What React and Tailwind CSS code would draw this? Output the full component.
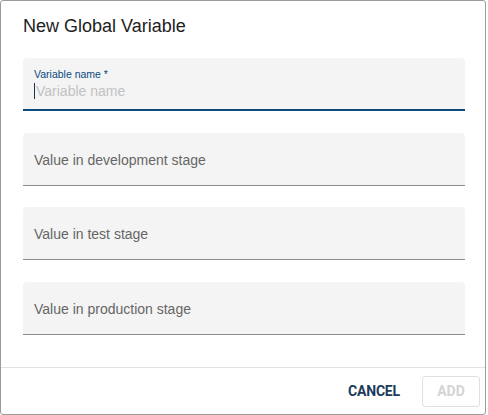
import React from 'react';

const fields = [
    'Value in development stage',
    'Value in test stage',
    'Value in production stage',
];

const App = () => {
    return (
        <div className="w-[488px] h-[415px] bg-white font-['Liberation_Sans',Arial,sans-serif]">
            <div className="w-[486px] h-[415px] flex flex-col border border-[#9b9b9b] rounded-[3px] bg-white">
                {/* Header */}
                <div className="pt-[13px] px-[22px]">
                    <h2 className="text-[18px] leading-6 text-[#212121]">New Global Variable</h2>
                </div>

                {/* Fields */}
                <div className="flex flex-col gap-[21.5px] mt-[20px] pl-[22px] pr-[20px]">
                    <div className="h-[53px] bg-[#f4f4f4] rounded-t-[4px] border-b-2 border-[#0b4a7c] pl-[11px] pt-[10px]">
                        <div className="text-[10.5px] leading-3 text-[#0b4a7c]">Variable name *</div>
                        <div className="flex items-center mt-px h-5">
                            <span className="w-px h-[16px] bg-[#1d3550] mr-px"></span>
                            <span className="text-[14px] leading-5 text-[#c2c2c2]">Variable name</span>
                        </div>
                    </div>

                    {fields.map((label) => (
                        <div
                            key={label}
                            className="h-[53px] bg-[#f4f4f4] rounded-t-[4px] border-b border-[#8c8c8c] pl-[11px] pt-[2px] flex items-center"
                        >
                            <span className="text-[14px] leading-5 text-[#666666]">{label}</span>
                        </div>
                    ))}
                </div>

                {/* Footer */}
                <div className="mt-auto h-[47px] border-t border-[#e2e2e2] flex items-center justify-end pr-[5px] font-['Roboto',sans-serif]">
                    <button className="w-[68px] h-[31px] text-[14px] font-bold text-[#1b3a5c] tracking-[-0.2px]">
                        CANCEL
                    </button>
                    <button className="ml-[14px] w-[58px] h-[31px] border border-[#e0e0e0] rounded-[3px] text-[14px] font-bold text-[#d4d4d4]">
                        ADD
                    </button>
                </div>
            </div>
        </div>
    );
};

export default App;
